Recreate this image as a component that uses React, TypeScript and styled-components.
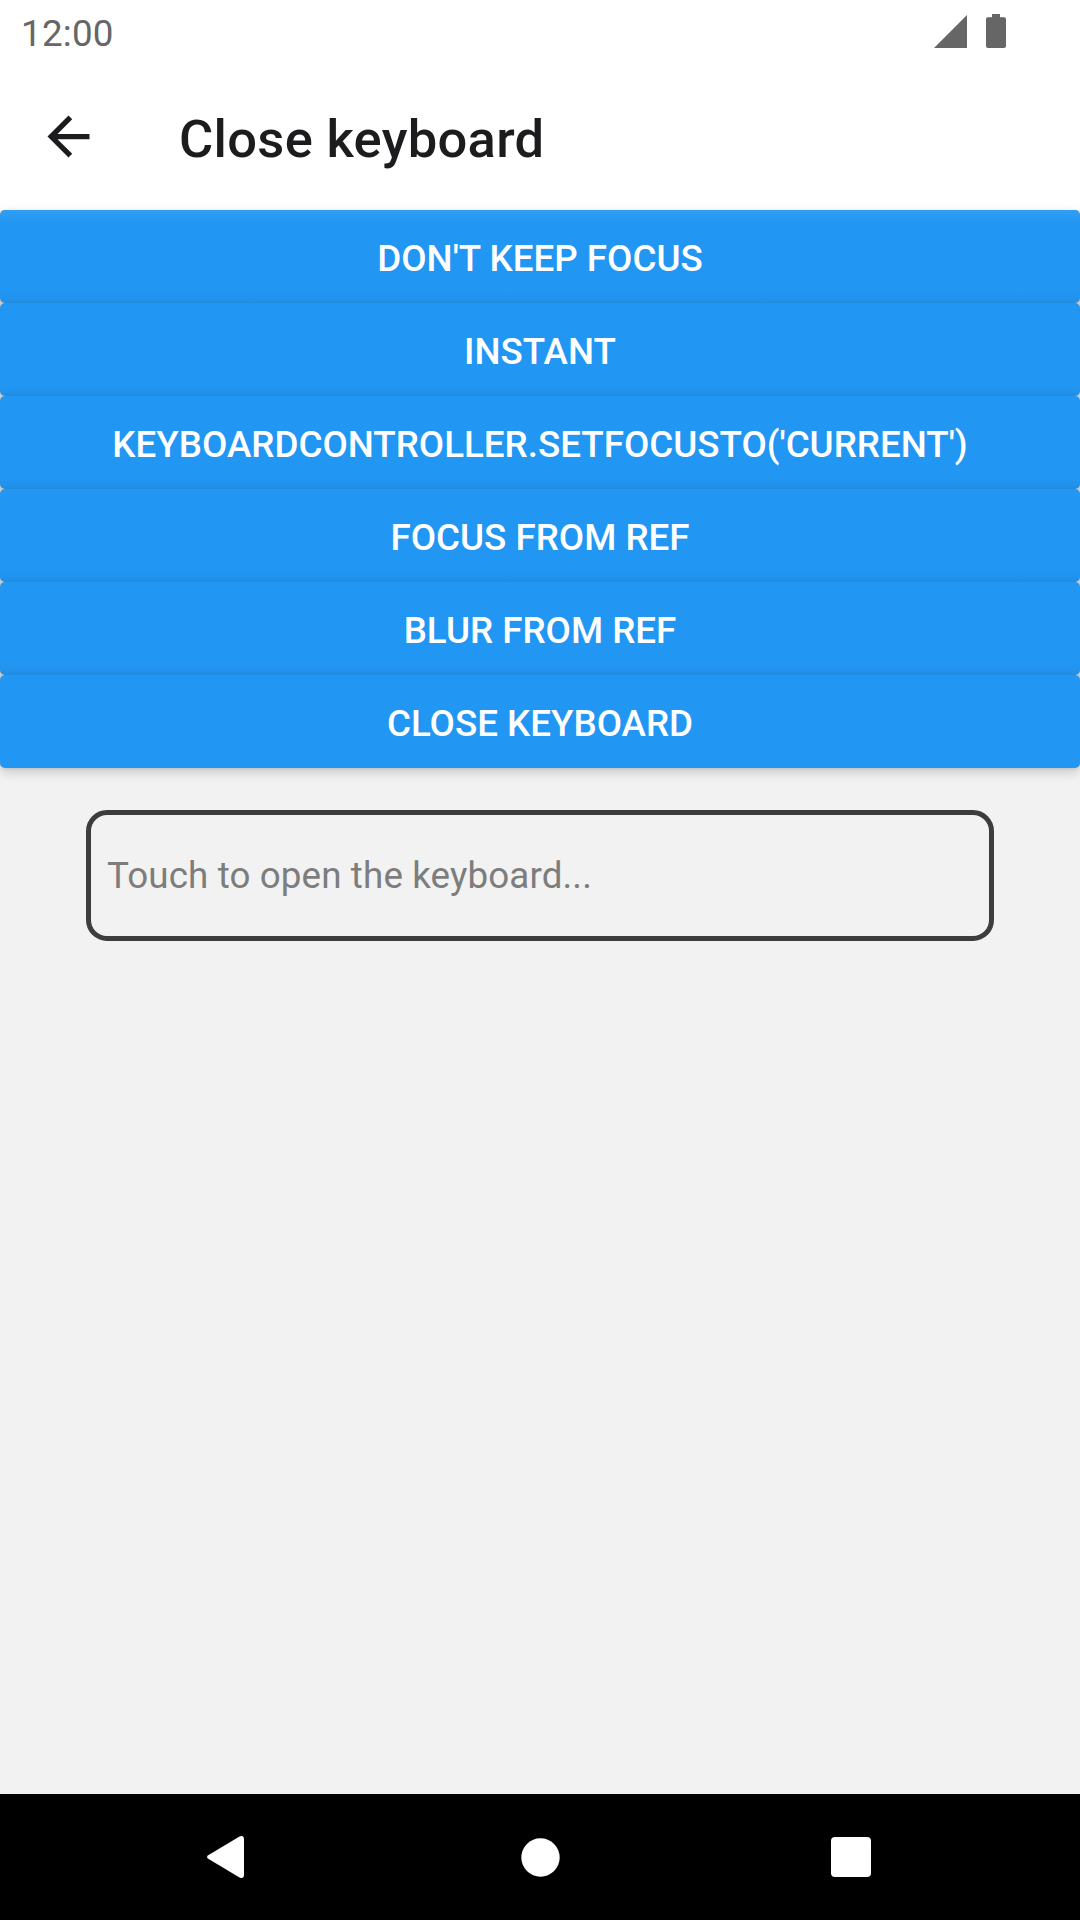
import React from "react";
import styled, { createGlobalStyle } from "styled-components";

const GlobalStyle = createGlobalStyle`
  * { box-sizing: border-box; }
  html, body { margin: 0; padding: 0; background: #f2f2f2; }
  body { font-family: Roboto, "Liberation Sans", sans-serif; }
`;

const Screen = styled.div`
  display: flex;
  flex-direction: column;
  width: 1080px;
  height: 1920px;
  overflow: hidden;
  background: #f2f2f2;
`;

const StatusBar = styled.div`
  display: flex;
  align-items: center;
  justify-content: space-between;
  flex: none;
  height: 63px;
  padding: 5px 74px 0 21px;
  background: #fff;
`;

const Clock = styled.span`
  font-size: 36.75px;
  line-height: 44px;
  letter-spacing: 0.25px;
  color: #666;
`;

const StatusIcons = styled.div`
  display: flex;
  align-items: center;
  gap: 19px;
  height: 34px;
  margin-top: -6px;

  svg { display: block; }
`;

const Header = styled.header`
  display: flex;
  align-items: center;
  flex: none;
  height: 147px;
  padding-left: 36.75px;
  background: #fff;
`;

const BackButton = styled.button`
  display: flex;
  padding: 0;
  border: 0;
  background: none;
  color: #1c1c1e;
`;

const Title = styled.h1`
  margin: 5px 0 0 79.25px;
  font-size: 52.5px;
  font-weight: 500;
  line-height: 62px;
  letter-spacing: 0.3px;
  color: #1c1c1e;
`;

const Content = styled.main`
  display: flex;
  flex-direction: column;
  flex: 1;
`;

const ButtonList = styled.div`
  display: flex;
  flex-direction: column;
  border-radius: 5px;
  background: #c9c9c9;
  box-shadow: 0 4px 12px rgba(0, 0, 0, 0.18), 0 1px 3px rgba(0, 0, 0, 0.07);
`;

const ActionButton = styled.button<{ $first: boolean; $last: boolean }>`
  height: 93px;
  padding: 4px 0 0;
  border: 0;
  border-radius: 5px;
  background-color: #2196f3;
  background-image: ${({ $first, $last }) =>
    [
      $first && "linear-gradient(to bottom, rgba(255,255,255,.07), rgba(255,255,255,0) 13px)",
      !$last && "linear-gradient(to top, rgba(30,60,80,.12), rgba(30,60,80,.03) 5px, rgba(30,60,80,0) 11px)",
    ]
      .filter(Boolean)
      .join(", ") || "none"};
  font-family: inherit;
  font-size: 36.75px;
  font-weight: 500;
  line-height: 43px;
  text-transform: uppercase;
  color: #fff;
`;

const TextField = styled.input`
  height: 131px;
  margin: 42px 86px 0;
  padding: 0 16px;
  border: 5px solid #3d3d3d;
  border-radius: 21px;
  outline: 0;
  background: transparent;
  font-family: inherit;
  font-size: 36.75px;
  letter-spacing: 0.12px;
  color: #3d3d3d;

  &::placeholder { color: #7d7d7d; opacity: 1; }
`;

const NavBar = styled.nav`
  display: grid;
  grid-template-columns: 37px 1fr 40px;
  align-items: center;
  justify-items: center;
  flex: none;
  height: 126px;
  padding: 0 209px 0 207px;
  background: #000;

  svg { display: block; }
`;

const HomeIcon = styled.svg`
  margin-left: 5px;
`;

const actions = [
  "Don't keep focus",
  "Instant",
  "KeyboardController.setFocusTo('current')",
  "Focus from ref",
  "Blur from ref",
  "Close keyboard",
];

export default function App() {
  return (
    <Screen>
      <GlobalStyle />
      <StatusBar>
        <Clock>12:00</Clock>
        <StatusIcons>
          <svg width="33" height="33" viewBox="0 0 33 33" fill="#666">
            <path d="M33 0v33H0z" />
          </svg>
          <svg width="20" height="34" viewBox="0 0 20 34" fill="#666">
            <path d="M6 0h8v3.300h4a2 2 0 0 1 2 2V32a2 2 0 0 1-2 2H2a2 2 0 0 1-2-2V5.300a2 2 0 0 1 2-2h4z" />
          </svg>
        </StatusIcons>
      </StatusBar>
      <Header>
        <BackButton aria-label="Back">
          <svg width="63" height="63" viewBox="0 0 24 24" fill="currentColor">
            <path d="M20 11H7.830l5.590-5.590L12 4l-8 8 8 8 1.410-1.410L7.830 13H20v-2z" />
          </svg>
        </BackButton>
        <Title>Close keyboard</Title>
      </Header>
      <Content>
        <ButtonList>
          {actions.map((label, i) => (
            <ActionButton key={label} $first={i === 0} $last={i === actions.length - 1}>
              {label}
            </ActionButton>
          ))}
        </ButtonList>
        <TextField placeholder="Touch to open the keyboard..." />
      </Content>
      <NavBar>
        <svg width="37" height="42" viewBox="0 0 37 42" fill="#fff">
          <path d="M1.200 19.200 32.500.5Q37-1.300 37 3v36q0 4.300-4.500 2.500L1.200 22.800Q-1.200 21 1.200 19.200z" />
        </svg>
        <HomeIcon width="39" height="39" viewBox="0 0 39 39" fill="#fff">
          <circle cx="19.500" cy="19.500" r="19.200" />
        </HomeIcon>
        <svg width="40" height="40" viewBox="0 0 40 40" fill="#fff">
          <rect width="40" height="40" rx="4" />
        </svg>
      </NavBar>
    </Screen>
  );
}
